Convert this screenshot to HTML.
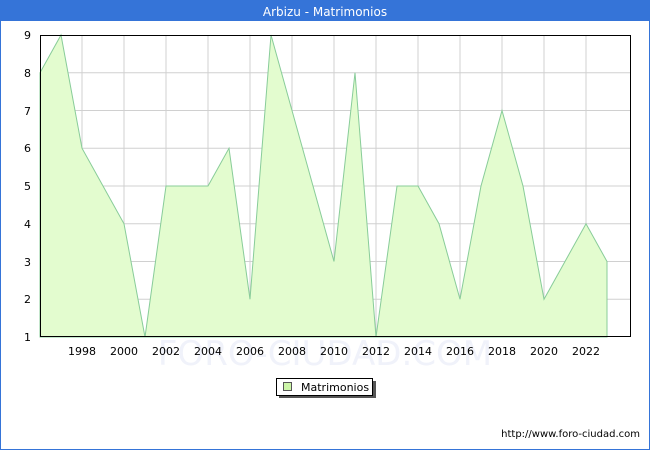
<!DOCTYPE html>
<html><head><style>
body{margin:0;width:650px;height:450px;overflow:hidden;font-family:"DejaVu Sans","Liberation Sans",sans-serif;}
</style></head><body>
<svg width="650" height="450" xmlns="http://www.w3.org/2000/svg" font-family="DejaVu Sans, Liberation Sans, sans-serif">
<rect x="0.5" y="0.5" width="649" height="449" fill="#fff" stroke="#3574d8"/>
<rect x="0" y="0" width="650" height="21" fill="#3574d8"/>
<text x="325" y="16" fill="#fff" font-size="12" text-anchor="middle">Arbizu - Matrimonios</text>
<g stroke="#d0d0d0" stroke-width="1">
<line x1="40" y1="72.75" x2="631" y2="72.75"/><line x1="40" y1="110.5" x2="631" y2="110.5"/><line x1="40" y1="148.25" x2="631" y2="148.25"/><line x1="40" y1="186" x2="631" y2="186"/><line x1="40" y1="223.75" x2="631" y2="223.75"/><line x1="40" y1="261.5" x2="631" y2="261.5"/><line x1="40" y1="299.25" x2="631" y2="299.25"/>
<line x1="82" y1="35" x2="82" y2="337"/><line x1="124" y1="35" x2="124" y2="337"/><line x1="166" y1="35" x2="166" y2="337"/><line x1="208" y1="35" x2="208" y2="337"/><line x1="250" y1="35" x2="250" y2="337"/><line x1="292" y1="35" x2="292" y2="337"/><line x1="334" y1="35" x2="334" y2="337"/><line x1="376" y1="35" x2="376" y2="337"/><line x1="418" y1="35" x2="418" y2="337"/><line x1="460" y1="35" x2="460" y2="337"/><line x1="502" y1="35" x2="502" y2="337"/><line x1="544" y1="35" x2="544" y2="337"/><line x1="586" y1="35" x2="586" y2="337"/>
</g>
<polygon fill="#e3fccf" stroke="#88cc99" stroke-width="1" points="40,337 40,72.75 61,35 82,148.25 103,186 124,223.75 145,337 166,186 187,186 208,186 229,148.25 250,299.25 271,35 292,110.5 313,186 334,261.5 355,72.75 376,337 397,186 418,186 439,223.75 460,299.25 481,186 502,110.5 523,186 544,299.25 565,261.5 586,223.75 607,261.5 607,337"/>
<text x="325" y="365" font-size="34" fill="#f0f2fa" text-anchor="middle">FORO-CIUDAD.COM</text>
<rect x="40.5" y="35.5" width="590" height="301" fill="none" stroke="#000"/>
<g font-size="11" fill="#000" text-anchor="end">
<text x="31" y="39">9</text><text x="31" y="77">8</text><text x="31" y="115">7</text><text x="31" y="152">6</text><text x="31" y="190">5</text><text x="31" y="228">4</text><text x="31" y="266">3</text><text x="31" y="303">2</text><text x="31" y="341">1</text>
</g>
<g font-size="11" fill="#000" text-anchor="middle">
<text x="82" y="355">1998</text><text x="124" y="355">2000</text><text x="166" y="355">2002</text><text x="208" y="355">2004</text><text x="250" y="355">2006</text><text x="292" y="355">2008</text><text x="334" y="355">2010</text><text x="376" y="355">2012</text><text x="418" y="355">2014</text><text x="460" y="355">2016</text><text x="502" y="355">2018</text><text x="544" y="355">2020</text><text x="586" y="355">2022</text>
</g>
<rect x="279" y="381" width="97" height="17" fill="#555"/>
<rect x="276.5" y="378.5" width="96" height="17" fill="#fff" stroke="#000"/>
<rect x="283.5" y="382.5" width="8" height="8" fill="#ccf5a8" stroke="#555"/>
<text x="301" y="391" font-size="11">Matrimonios</text>
<text x="640" y="437" font-size="10" text-anchor="end">http://www.foro-ciudad.com</text>
</svg>
</body></html>
